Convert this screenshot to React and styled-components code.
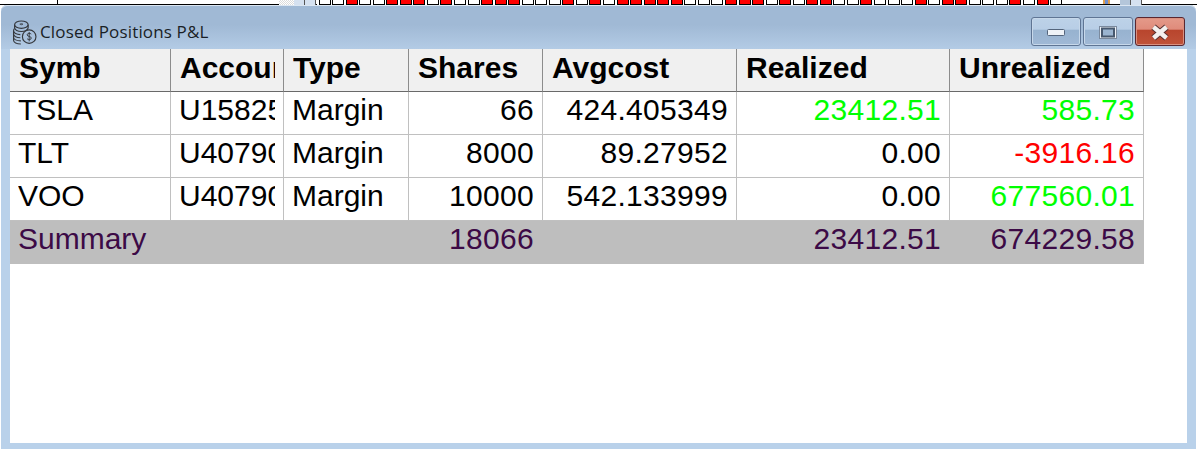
import styled, { createGlobalStyle } from "styled-components";

const GlobalStyle = createGlobalStyle`
  html, body {
    margin: 0;
    padding: 0;
    background: #ffffff;
    overflow: hidden;
  }
`;

const redCells = [2, 5, 6, 7, 9, 12, 13, 14, 18, 20, 22, 23, 24, 25, 26, 30, 31, 32, 34, 36, 37, 40, 44, 46, 47, 51, 53];
const stripCells = Array.from({ length: 55 }, (_, i) => redCells.includes(i));

const columns = "161px 113px 125px 134px 194px 213px 194px";

const rows = [
  { symb: "TSLA", account: "U1582536", shares: "66", avg: "424.405349", realized: "23412.51", unrealized: "585.73", realizedTone: "up", tone: "up" },
  { symb: "TLT", account: "U4079012", shares: "8000", avg: "89.27952", realized: "0.00", unrealized: "-3916.16", realizedTone: "flat", tone: "down" },
  { symb: "VOO", account: "U4079012", shares: "10000", avg: "542.133999", realized: "0.00", unrealized: "677560.01", realizedTone: "flat", tone: "up" },
];

const toneColors = { up: "#00ff00", down: "#ff0000", flat: "#000000" };

const Page = styled.div`
  width: 1197px;
  height: 449px;
  display: flex;
  flex-direction: column;
  background: #ffffff;
  overflow: hidden;
`;

const BackStrip = styled.div`
  height: 5px;
  flex: none;
  display: flex;
  background: #ffffff;
`;

const BackSegment = styled.div`
  width: ${(p) => (p.$width ? `${p.$width}px` : "auto")};
  flex: ${(p) => (p.$width ? "none" : "1")};
  box-sizing: border-box;
  border-bottom: 1px solid #000000;
  border-right: ${(p) => (p.$divider ? "1px solid #000000" : "none")};
`;

const BackDither = styled.div`
  width: 15px;
  flex: none;
  background: repeating-conic-gradient(#dcdcdc 0 25%, #ffffff 0 50%) 0 0 / 2px 2px;
`;

const BackTab = styled.div`
  width: 11px;
  flex: none;
  box-sizing: border-box;
  background: ${(p) => p.$color || "#d5e1f0"};
  border-right: 1px solid #555555;
`;

const BackCell = styled.div`
  width: 10px;
  flex: none;
  margin-left: 1.55px;
  background: ${(p) => (p.$red ? "#ff0000" : "#ffffff")};
  border-left: 1px solid #000000;
  border-right: 1px solid #000000;
  box-shadow: 0 1px 0 #000000;
  height: 4px;
  box-sizing: content-box;
`;

const BackSpike = styled.div`
  width: 7px;
  flex: none;
  box-sizing: border-box;
  border-bottom: 1px solid #000000;
  background: linear-gradient(90deg, #e0a050 0 30%, #6f8fd0 30% 70%, #e0a050 70%);
`;

const Window = styled.div`
  flex: 1;
  margin: 0 1px;
  display: flex;
  flex-direction: column;
  background: #b9d1ea;
  border-radius: 6px 6px 0 0;
`;

const TitleBar = styled.div`
  height: 44px;
  flex: none;
  display: flex;
  align-items: flex-start;
  padding: 0 11px 0 11px;
  background: linear-gradient(180deg, #a0b9d5 0%, #a0b9d5 45%, #b3cbe5 100%);
  border-radius: 6px 6px 0 0;
  box-shadow: inset 0 1px 0 #dbe6f2;
`;

const TitleIcon = styled.svg`
  width: 25px;
  height: 25px;
  margin-top: 15px;
  flex: none;
`;

const TitleText = styled.span`
  margin: 16px 0 0 3px;
  font-family: "Open Sans", "Noto Sans", sans-serif;
  font-size: 17px;
  line-height: 22px;
  letter-spacing: 0.15px;
  color: #1a1f26;
`;

const Controls = styled.div`
  margin: 12px 0 0 auto;
  display: flex;
  gap: 2px;
`;

const ControlButton = styled.div`
  width: 50px;
  height: 29px;
  padding-top: 2px;
  display: flex;
  align-items: center;
  justify-content: center;
  box-sizing: border-box;
  border-radius: 3px;
  border: 1px solid ${(p) => (p.$close ? "#5a2730" : "#5f7594")};
  box-shadow: inset 0 0 0 1px ${(p) => (p.$close ? "#d99080" : "#c7d8ea")};
  background: ${(p) =>
    p.$close
      ? "linear-gradient(180deg, #e49a8a 0%, #df8b7b 42%, #b8452d 44%, #c0533a 100%)"
      : "linear-gradient(180deg, #bdd2e8 0%, #b8cee6 42%, #97b2cf 44%, #a0b9d6 100%)"};
`;

const Client = styled.div`
  flex: 1;
  margin: 0 9px 6px 9px;
  background: #ffffff;
`;

const Row = styled.div`
  display: grid;
  grid-template-columns: ${columns};
  height: 43px;
  width: 1134px;
  font-family: "Liberation Sans", Arial, sans-serif;
  font-size: 30px;
  color: #000000;
`;

const HeaderCell = styled.div`
  background: #f0f0f0;
  border-right: 1px solid #8c8c8c;
  border-bottom: 1px solid #696969;
  font-weight: 700;
  line-height: 37px;
  padding: 0 8px 0 9px;
  white-space: nowrap;
  min-width: 0;
`;

const Cell = styled.div`
  border-right: 1px solid #c0c0c0;
  border-bottom: 1px solid #c0c0c0;
  line-height: 36px;
  padding: 0 8px;
  white-space: nowrap;
  min-width: 0;
  text-align: ${(p) => (p.$right ? "right" : "left")};
  letter-spacing: ${(p) => (p.$right ? "0.3px" : "0")};
  color: ${(p) => toneColors[p.$tone] || "#000000"};
`;

const CellText = styled.div`
  overflow: hidden;
`;

const SummaryRow = styled(Row)`
  background: #bebebe;
  color: #3c0a46;
  line-height: 36px;
`;

const SummaryCell = styled.div`
  padding: 0 ${(p) => (p.$right ? 9 : 8)}px 0 8px;
  white-space: nowrap;
  grid-column: ${(p) => p.$span || "auto"};
  text-align: ${(p) => (p.$right ? "right" : "left")};
  letter-spacing: ${(p) => (p.$right ? "0.3px" : "0")};
`;

const CoinsIcon = () => (
  <TitleIcon viewBox="0 0 24 24" fill="none" stroke="#35383d" strokeWidth="1.1">
    <ellipse cx="9" cy="4.5" rx="6.5" ry="3.5" />
    <path d="M2.5 4.5v3c0 2 3 3.5 6.5 3.5s6.5-1.5 6.5-3.5v-3" />
    <path d="M2.5 8c-.8.6-1 1.4-1 2.5 0 2 3 3.5 6.5 3.5" />
    <path d="M1.5 10.5v3c0 2 3 3.5 6.5 3.5M1.5 13.5v3c0 2 3 3.5 7 3.5M1.5 16.5v3c0 2 3 3.5 7 3.5" />
    <circle cx="16.5" cy="16" r="6.5" fill="#a9c1dc" />
    <path d="M18.5 13.5c-1-1-4-1-4 .8s4 1 4 3-3 1.8-4 .7M16.5 11.5v9" strokeWidth="0.9" />
    <path d="M7.5 4c.8-.6 2.4-.6 3 0-.6.7-2.3.7-3 0z" strokeWidth="0.8" />
  </TitleIcon>
);

const App = () => (
  <Page>
    <GlobalStyle />
    <BackStrip>
      <BackSegment $width={58} $divider />
      <BackSegment $width={221} />
      <BackDither />
      <BackTab />
      <BackTab />
      <BackSegment $width={1} />
      {stripCells.map((red, i) => (
        <BackCell key={i} $red={red} />
      ))}
      <BackSegment $width={41} />
      <BackSpike />
      <BackSegment $width={10} />
      <BackTab $color="#b4c6da" />
      <BackTab />
      <BackSegment />
    </BackStrip>
    <Window>
      <TitleBar>
        <CoinsIcon />
        <TitleText>Closed Positions P&amp;L</TitleText>
        <Controls>
          <ControlButton>
            <svg width="18" height="7" viewBox="0 0 18 7">
              <rect x="0.5" y="0.5" width="17" height="6" rx="1" fill="#eef2f7" stroke="#54657c" />
            </svg>
          </ControlButton>
          <ControlButton>
            <svg width="18" height="13" viewBox="0 0 18 13">
              <rect x="0.5" y="0.5" width="17" height="12" fill="#eef2f7" stroke="#7b8a9e" />
              <rect x="3" y="2.5" width="12" height="8" fill="#9ab4d0" stroke="#47586e" strokeWidth="2" />
            </svg>
          </ControlButton>
          <ControlButton $close>
            <svg width="20" height="17" viewBox="0 0 20 17">
              <path d="M3.5 3l13 11M16.5 3l-13 11" stroke="#5a3030" strokeWidth="6.5" />
              <path d="M3.5 3l13 11M16.5 3l-13 11" stroke="#f4f1ef" strokeWidth="4.5" />
            </svg>
          </ControlButton>
        </Controls>
      </TitleBar>
      <Client>
        <Row>
          <HeaderCell><CellText>Symb</CellText></HeaderCell>
          <HeaderCell><CellText>Accounts</CellText></HeaderCell>
          <HeaderCell><CellText>Type</CellText></HeaderCell>
          <HeaderCell><CellText>Shares</CellText></HeaderCell>
          <HeaderCell><CellText>Avgcost</CellText></HeaderCell>
          <HeaderCell><CellText>Realized</CellText></HeaderCell>
          <HeaderCell><CellText>Unrealized</CellText></HeaderCell>
        </Row>
        {rows.map((r) => (
          <Row key={r.symb}>
            <Cell><CellText>{r.symb}</CellText></Cell>
            <Cell><CellText>{r.account}</CellText></Cell>
            <Cell><CellText>Margin</CellText></Cell>
            <Cell $right><CellText>{r.shares}</CellText></Cell>
            <Cell $right><CellText>{r.avg}</CellText></Cell>
            <Cell $right $tone={r.realizedTone}><CellText>{r.realized}</CellText></Cell>
            <Cell $right $tone={r.tone}><CellText>{r.unrealized}</CellText></Cell>
          </Row>
        ))}
        <SummaryRow>
          <SummaryCell $span="span 3">Summary</SummaryCell>
          <SummaryCell $right>18066</SummaryCell>
          <SummaryCell />
          <SummaryCell $right>23412.51</SummaryCell>
          <SummaryCell $right>674229.58</SummaryCell>
        </SummaryRow>
      </Client>
    </Window>
  </Page>
);

export default App;
